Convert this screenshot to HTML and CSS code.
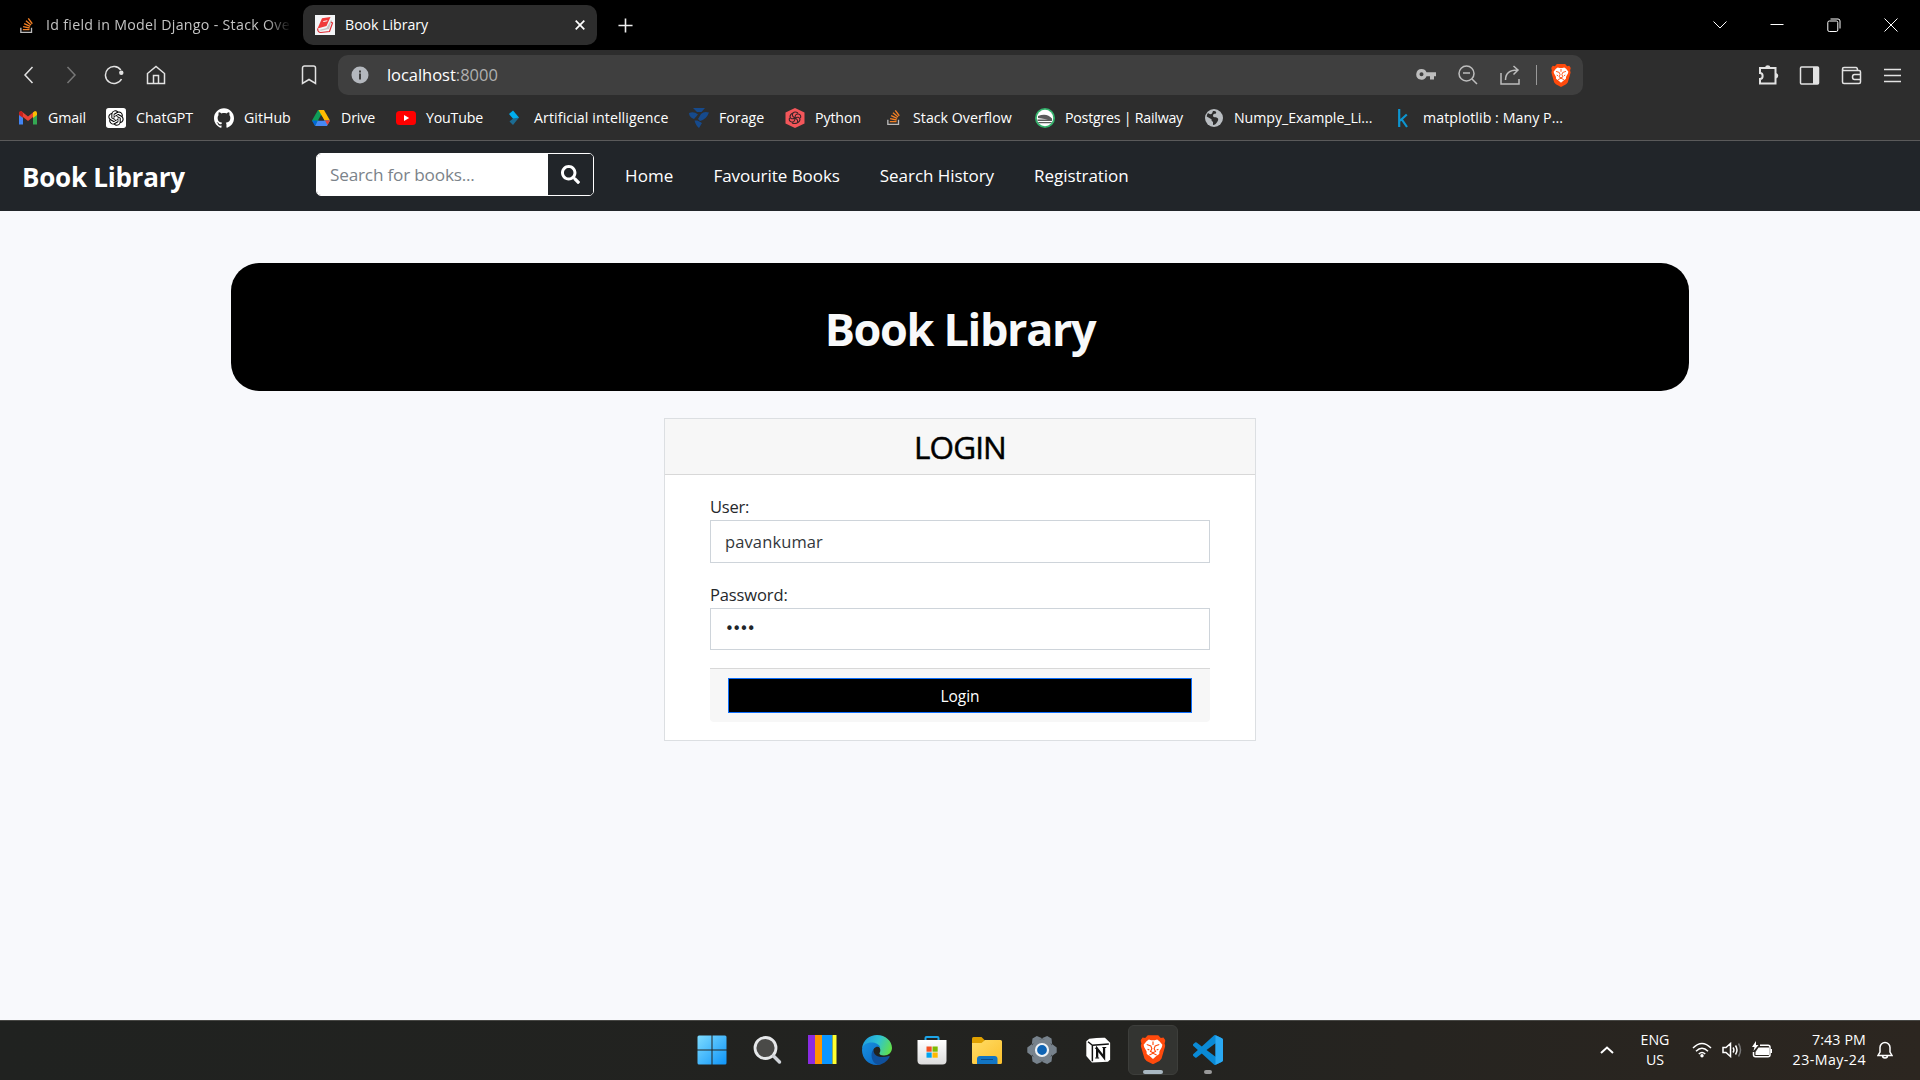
FILE: index.html
```html
<!DOCTYPE html>
<html lang="en">
<head>
<meta charset="utf-8">
<title>Book Library</title>
<link rel="stylesheet" href="styles.css">
</head>
<body>
<svg class="defs" aria-hidden="true">
  <symbol id="stack" viewBox="0 0 24 24">
    <path fill="#f48024" d="M15.725 0l-1.72 1.277 6.39 8.588 1.716-1.277L15.725 0zm-3.94 3.418l-1.369 1.644 8.225 6.85 1.369-1.644-8.225-6.85zm-3.15 4.465l-.905 1.94 9.702 4.517.904-1.94-9.701-4.517zm-1.85 4.86l-.44 2.093 10.473 2.201.44-2.092-10.473-2.203zM6.155 17.603v2.13h10.66v-2.13z"/>
    <path fill="#bcbbbb" d="M1.89 15.47V24h19.19v-8.53h-2.133v6.397H4.021v-6.396H1.89z"/>
  </symbol>
  <symbol id="brave" viewBox="0 0 24 28">
    <path fill="#ff4a0c" d="M7 0h10l2.500 2.600L22 2.200 24 5l-.9 3 .7 2.200-3.600 12.200-2 2.400L12 28l-6.200-3.200-2-2.400L.2 10.200.9 8 0 5l2-2.800 2.500.400z"/>
    <path fill="#fff" d="M8 4.200l2.400.7h3.200l2.400-.7 2.200 1.600 2.800 3.500-.6 2.300-2.200 3.900-.2 2.600L15.200 20 12 22.800 8.800 20 6 18.100l-.2-2.600-2.200-3.900L3 9.300l2.800-3.500z"/>
    <path fill="none" stroke="#ff4a0c" stroke-width="1.100" d="M6 9l3.900 1.300 1 2.700-1.300 2.600 2.400 1.200 2.400-1.200-1.300-2.600 1-2.700L18 9M12 6v3.500M8.500 19l3.500-1.600 3.500 1.600M6.800 13.500l1.700.8M17.200 13.500l-1.700.8"/>
  </symbol>
</svg>

<header class="tabs">
  <div class="tab">
    <svg class="tab-icon so" viewBox="0 0 24 24"><use href="#stack"/></svg>
    <span class="tab-title faded">Id field in Model Django - Stack Over</span>
  </div>
  <div class="tab active">
    <svg class="tab-icon book" viewBox="0 0 20 20"><path fill="#f3f5f7" d="M0 0h20v20H0z"/><path fill="#f03a3a" d="M7 3.200L15.500 2 11.500 11 2.500 13.500z"/><path fill="#c9c2c2" d="M3.500 15l8-2 4.500-8 .8.600L14 14l-8 1.700z"/><path fill="none" stroke="#e02b33" stroke-width="1.200" d="M2.800 13.500c-.5 2 .8 4 3 4l8.700-1 3-8.500-1.500-1"/><path fill="#fff" d="M8.500 6l4-.8-.4 1-4 .9z"/></svg>
    <span class="tab-title">Book Library</span>
    <svg class="tab-close" viewBox="0 0 10 10"><path d="M.7.7l8.600 8.600M9.300.7L.7 9.300"/></svg>
  </div>
  <svg class="new-tab" viewBox="0 0 16 16"><path d="M8 .5v15M.5 8h15"/></svg>
  <div class="window-buttons">
    <svg viewBox="0 0 14 14"><path d="M.5 3.500L7 10l6.500-6.500"/></svg>
    <svg viewBox="0 0 14 14"><path d="M.5 6.500h13"/></svg>
    <svg viewBox="0 0 14 14"><rect x=".8" y="3" width="10" height="10.500" rx="1.500"/><path d="M3.500 1h7.500a2 2 0 0 1 2 2v7.500"/></svg>
    <svg viewBox="0 0 14 14"><path d="M.5.5l13 13M13.500.5l-13 13"/></svg>
  </div>
</header>

<div class="toolbar">
  <div class="nav-buttons">
    <svg viewBox="0 0 20 20"><path d="M13.500 2L6 10l7.500 8"/></svg>
    <svg class="disabled" viewBox="0 0 20 20"><path d="M6.500 2l7.500 8-7.500 8"/></svg>
    <svg viewBox="0 0 20 20"><path d="M16.800 5A8.500 8.500 0 1 0 17.500 14"/><circle class="solid" cx="17.300" cy="7.700" r="2.200"/></svg>
    <svg viewBox="0 0 20 20"><path d="M1.500 8.500L10 1.500l8.500 7V18.500h-17zM7.500 18v-7.500h5V18"/></svg>
  </div>
  <svg class="bookmark-button" viewBox="0 0 20 20"><path d="M3.500 3a2 2 0 0 1 2-2h9a2 2 0 0 1 2 2v15.500L10 14.500l-6.500 4z"/></svg>
  <div class="address">
    <svg class="info" viewBox="0 0 20 20"><circle cx="10" cy="10" r="8.500"/><path d="M9 8.500h2V14.500H9zM9 5.500h2v2H9z"/></svg>
    <span class="url">localhost<span class="port">:8000</span></span>
    <div class="address-tools">
      <svg viewBox="0 0 20 20"><path class="solid" fill-rule="evenodd" d="M5.500 4a5.300 5.300 0 1 0 5 7.200H14v3.300h4v-3.300h2V7.300h-9.500a5.300 5.300 0 0 0-5-3.300zm0 3.300a2 2 0 1 1 0 4 2 2 0 0 1 0-4z"/></svg>
      <svg viewBox="0 0 20 20"><circle cx="8.500" cy="8.500" r="7.500"/><path d="M5 8h7M14 14l5 5"/></svg>
      <svg viewBox="0 0 20 20"><path d="M1 8v11h18v-5M5.500 15c0-6 4-10 12-10M13.500 1l4.500 4-4.500 4.500"/></svg>
      <i class="divider"></i>
      <svg class="brave" viewBox="0 0 24 28"><use href="#brave"/></svg>
    </div>
  </div>
  <div class="extensions">
    <svg viewBox="0 0 21 21"><path stroke-width="2" d="M2 3h15.500v15.500H2v-4.500c3.500 0 3.500-6 0-6z"/><path class="solid" d="M7 2.500a2.800 2.800 0 0 1 5.500 0zM18 8a2.800 2.800 0 0 1 0 5.500z"/></svg>
    <svg viewBox="0 0 21 21"><rect x="1.500" y="2" width="18" height="17" rx="1"/><path class="solid" d="M14 2h5.500v17H14z"/></svg>
    <svg viewBox="0 0 21 21"><path d="M1.500 4v13q0 1.500 1.500 1.500h15q1.500 0 1.500-1.500V7q0-1.500-1.500-1.500H3Q1.500 5.500 1.500 4q0-1.500 1.500-1.500h12q1.500 0 1.500 3M19.500 9.500h-6q-2 0-2 2.500t2 2.500h6z"/></svg>
    <svg viewBox="0 0 21 21"><path d="M2 4.500h17M2 10.500h17M2 16.500h17"/></svg>
  </div>
</div>

<nav class="bookmarks">
  <div class="bm gmail"><svg viewBox="0 0 20 20"><path fill="#4285f4" d="M1 5.500v11h4V9z"/><path fill="#34a853" d="M19 5.500v11h-4V9z"/><path fill="#ea4335" d="M1 4.500L3.500 3.200 10 8.500l6.500-5.300L15 9l-5 4-5-4z"/><path fill="#c5221f" d="M1 7V5q0-2 2-2l2 1.500V10z"/><path fill="#fbbc04" d="M19 7V5q0-2-2-2l-2 1.500V10z"/></svg><span>Gmail</span></div>
  <div class="bm chatgpt"><svg viewBox="0 0 30 30"><rect width="30" height="30" rx="4" fill="#fff"/><path transform="translate(3.500 3.500) scale(.96)" d="M22.2819 9.8211a5.9847 5.9847 0 0 0-.5157-4.9108 6.0462 6.0462 0 0 0-6.5098-2.9A6.0651 6.0651 0 0 0 4.9807 4.1818a5.9847 5.9847 0 0 0-3.9977 2.9 6.0462 6.0462 0 0 0 .7427 7.0966 5.98 5.98 0 0 0 .511 4.9107 6.051 6.051 0 0 0 6.5146 2.9001A5.9847 5.9847 0 0 0 13.2599 24a6.0557 6.0557 0 0 0 5.7718-4.2058 5.9894 5.9894 0 0 0 3.9977-2.9001 6.0557 6.0557 0 0 0-.7475-7.0729zm-9.022 12.6081a4.4755 4.4755 0 0 1-2.8764-1.0408l.1419-.0804 4.7783-2.7582a.7948.7948 0 0 0 .3927-.6813v-6.7369l2.02 1.1686a.071.071 0 0 1 .038.052v5.5826a4.504 4.504 0 0 1-4.4945 4.4944zm-9.6607-4.1254a4.4708 4.4708 0 0 1-.5346-3.0137l.142.0852 4.783 2.7582a.7712.7712 0 0 0 .7806 0l5.8428-3.3685v2.3324a.0804.0804 0 0 1-.0332.0615L9.74 19.9502a4.4992 4.4992 0 0 1-6.1408-1.6464zM2.3408 7.8956a4.485 4.485 0 0 1 2.3655-1.9728V11.6a.7664.7664 0 0 0 .3879.6765l5.8144 3.3543-2.0201 1.1685a.0757.0757 0 0 1-.071 0l-4.8303-2.7865A4.504 4.504 0 0 1 2.3408 7.872zm16.5963 3.8558L13.1038 8.364 15.1192 7.2a.0757.0757 0 0 1 .071 0l4.8303 2.7913a4.4944 4.4944 0 0 1-.6765 8.1042v-5.6772a.79.79 0 0 0-.407-.667zm2.0107-3.0231l-.142-.0852-4.7735-2.7818a.7759.7759 0 0 0-.7854 0L9.409 9.2297V6.8974a.0662.0662 0 0 1 .0284-.0615l4.8303-2.7866a4.4992 4.4992 0 0 1 6.6802 4.66zM8.3065 12.863l-2.02-1.1638a.0804.0804 0 0 1-.038-.0567V6.0742a4.4992 4.4992 0 0 1 7.3757-3.4537l-.142.0805L8.704 5.459a.7948.7948 0 0 0-.3927.6813zm1.0976-2.3654l2.602-1.4998 2.6069 1.4998v2.9994l-2.5974 1.4997-2.6067-1.4997Z"/></svg><span>ChatGPT</span></div>
  <div class="bm github"><svg viewBox="0 0 24 24"><path fill="#fff" d="M12 .297c-6.63 0-12 5.373-12 12 0 5.303 3.438 9.8 8.205 11.385.6.113.82-.258.82-.577 0-.285-.01-1.04-.015-2.04-3.338.724-4.042-1.61-4.042-1.61C4.422 18.07 3.633 17.7 3.633 17.7c-1.087-.744.084-.729.084-.729 1.205.084 1.838 1.236 1.838 1.236 1.07 1.835 2.809 1.305 3.495.998.108-.776.417-1.305.76-1.605-2.665-.3-5.466-1.332-5.466-5.93 0-1.31.465-2.38 1.235-3.22-.135-.303-.54-1.523.105-3.176 0 0 1.005-.322 3.3 1.23.96-.267 1.98-.399 3-.405 1.02.006 2.04.138 3 .405 2.28-1.552 3.285-1.23 3.285-1.23.645 1.653.24 2.873.12 3.176.765.84 1.23 1.91 1.23 3.22 0 4.61-2.805 5.625-5.475 5.92.42.36.81 1.096.81 2.22 0 1.606-.015 2.896-.015 3.286 0 .315.21.69.825.57C20.565 22.092 24 17.592 24 12.297c0-6.627-5.373-12-12-12"/></svg><span>GitHub</span></div>
  <div class="bm drive"><svg viewBox="0 0 20 20"><path fill="#0f9d58" d="M7 2h3l2 3.500L4.500 18 1 12.500z"/><path fill="#ffba00" d="M7.500 2h5.500L19 12.500h-5.500z"/><path fill="#4688f4" d="M4 18l2.800-5.500H19L16 18z"/><path fill="#ea4335" d="M14 12.500h5L16.500 17z"/><path fill="#2d2d2d" d="M10 7l3 5.500H6.900z"/><path fill="#0066da" d="M1 12.500h5.500L4 18z"/></svg><span>Drive</span></div>
  <div class="bm youtube"><svg viewBox="0 0 20 20"><rect y="3" width="20" height="14" rx="3.500" fill="red"/><path fill="#fff" d="M8 7l5.200 3L8 13z"/></svg><span>YouTube</span></div>
  <div class="bm ai"><svg viewBox="0 0 20 20"><path fill="#00aeef" d="M5 6l4-3.500 6 7L11 13z"/><path fill="#1c6c93" d="M9 10.500l6-1L9 17l-3.500-3.500z"/></svg><span>Artificial intelligence</span></div>
  <div class="bm forage"><svg viewBox="0 0 20 20"><g fill="#164a8c"><path d="M4 0h12l-3.500 4H8zM0 5q5-2 9 1.500L5 11Q0 9 0 5zM20 4.500q-5-1.500-8 1.500L9 11l2 2q6-1 9-8.500zM5.500 12.500l3 0L13 15l-3 5q-3-2-4.500-7.500z"/></g></svg><span>Forage</span></div>
  <div class="bm python"><svg viewBox="0 0 20 20"><path fill="#f4565a" d="M10 0l9.500 4.500v11L10 20 .5 15.500v-11z"/><g fill="none" stroke="#3b2528" stroke-width="1.100"><path d="M10 10q-4-2-2-5 2-2 5 0M10 10q0-4.500 3.500-4 3 1 2 4M10 10q4-2 5 1 0 3-3 4M10 10q4 2 2 5-2 1-5 0M10 10q0 4.500-3.500 4-3-1-2-4M10 10q-4 2-5-1 0-3 3-4"/></g></svg><span>Python</span></div>
  <div class="bm overflow"><svg class="so" viewBox="0 0 24 24"><use href="#stack"/></svg><span>Stack Overflow</span></div>
  <div class="bm postgres"><svg viewBox="0 0 20 20"><circle cx="10" cy="10" r="10" fill="#34b26c"/><circle cx="10" cy="10" r="8.200" fill="#fff"/><path fill="#5b5b5b" d="M3 8q9-3.500 14 2.500v2.500H2.500v-1.500H13L3 10zM3 14h14l-1 1.300H4z"/></svg><span>Postgres | Railway</span></div>
  <div class="bm numpy"><svg viewBox="0 0 20 20"><circle cx="10" cy="10" r="9" fill="#b9bdc1"/><path fill="#2d2d2d" d="M9 3q4-.5 3 2.500-3 0-3 2.200 0 1.500 3 1.500 3.500 1 1.500 4.300-2 3.500-4.500 3.500v-3q-2-1-1.500-2.800L2.700 8.500q0-2 1.300-3.500 2 2 4 .5z"/></svg><span>Numpy_Example_Li...</span></div>
  <div class="bm kaggle"><svg viewBox="0 0 20 20"><path fill="none" stroke="#0d95d0" stroke-width="2.200" d="M6.200 1v18M13.800 6.500L7 12.800M8.500 11l5.500 8"/></svg><span>matplotlib : Many P...</span></div>
</nav>

<nav class="navbar">
  <span class="brand">Book Library</span>
  <form class="search">
    <input type="text" placeholder="Search for books...">
    <button type="button" aria-label="Search"><svg viewBox="0 0 512 512"><path fill="#fff" d="M505 442.700L405.300 343c-4.500-4.500-10.600-7-17-7H372c27.600-35.300 44-79.700 44-128C416 93.100 322.900 0 208 0S0 93.100 0 208s93.100 208 208 208c48.300 0 92.700-16.400 128-44v16.300c0 6.400 2.500 12.500 7 17l99.700 99.700c9.400 9.400 24.600 9.400 33.900 0l28.300-28.300c9.400-9.400 9.400-24.600.1-34zM208 336c-70.700 0-128-57.200-128-128 0-70.700 57.200-128 128-128 70.700 0 128 57.200 128 128 0 70.700-57.200 128-128 128z"/></svg></button>
  </form>
  <div class="links">
    <a class="home">Home</a><a>Favourite Books</a><a>Search History</a><a>Registration</a>
  </div>
</nav>

<main>
  <section class="hero"><h1>Book Library</h1></section>
  <section class="card">
    <h2>LOGIN</h2>
    <form class="card-body">
      <label class="user" for="user">User:</label>
      <input id="user" type="text" value="pavankumar">
      <label for="pass">Password:</label>
      <input id="pass" type="password" value="pass">
      <div class="card-footer"><button type="button">Login</button></div>
    </form>
  </section>
</main>

<footer class="taskbar">
  <div class="apps">
    <div class="app"><svg viewBox="0 0 30 30"><defs><linearGradient id="win" x1="0" y1="0" x2="1" y2="1"><stop offset="0" stop-color="#7edcff"/><stop offset="1" stop-color="#0e94f8"/></linearGradient></defs><path fill="url(#win)" d="M2 .5h12.500v14H.5V2Q.5.500 2 .5zM15.500.5H28q1.500 0 1.500 1.500v12.500h-14zM.5 15.500h14v14H2q-1.500 0-1.500-1.500zM15.500 15.500h14V28q0 1.500-1.500 1.500H15.500z"/></svg></div>
    <div class="app"><svg viewBox="0 0 30 30"><circle cx="13.500" cy="13" r="10.500" fill="#4a4a48" stroke="#e6e8ea" stroke-width="2.800"/><path d="M21.500 21l6 6" stroke="#cfd3d8" stroke-width="3.500" stroke-linecap="round"/></svg></div>
    <div class="app"><svg viewBox="0 0 30 30"><path fill="#8a2be2" d="M1 0h7v29H1z"/><path fill="#ff9500" d="M8 0h7v29H8z"/><path fill="#0a96ff" d="M15 0h10.500v29H15z"/><path fill="#ffff2e" d="M25.500 0h4v29h-4z"/></svg></div>
    <div class="app"><svg viewBox="0 0 30 30"><defs><linearGradient id="e1" x1="0" y1=".3" x2="1" y2=".6"><stop offset="0" stop-color="#1e9de0"/><stop offset=".5" stop-color="#2fc3d3"/><stop offset="1" stop-color="#62e04a"/></linearGradient><linearGradient id="e2" x1="0" y1="0" x2="1" y2="1"><stop offset="0" stop-color="#1791e0"/><stop offset="1" stop-color="#0a62c0"/></linearGradient></defs><path fill="url(#e1)" d="M0 13.500C1 5 7.500 0 15 0c8.500 0 15 6 15 13 0 4.500-3.500 7.500-8 7.500-3.500 0-5-1.500-4.500-2.500 2-2.500.5-8-5-8C7 10 2 10.500 0 13.500z"/><path fill="url(#e2)" d="M0 15C.2 9.500 5 7.500 9.500 7.500c4 0 7.500 1.800 8.800 5-4.300-2-7.300 1-7.300 4.500 0 6 6.500 9.500 11 9C19.500 29 17.500 30 14.500 30 6.500 30 0 23.500 0 15z"/><path fill="#10519d" d="M11.500 14.500c-.5 6 6 9.500 15.500 6.500q1 0 .7.700C25 27 20 29.500 16 29.800 9 28 8 18 11.500 14.500z"/></svg></div>
    <div class="app"><svg viewBox="0 0 30 30"><defs><linearGradient id="bag" x1="0" y1="0" x2="0" y2="1"><stop offset="0" stop-color="#fff"/><stop offset="1" stop-color="#dcdcdc"/></linearGradient></defs><path fill="none" stroke="#1da5e8" stroke-width="2" d="M8.500 7V3q0-1 1-1h11q1 0 1 1v4"/><path fill="url(#bag)" d="M.5 5h29v20.500q0 4-4 4h-21q-4 0-4-4z"/><path fill="#f25022" d="M9.500 11.500h5.200v5.200H9.500z"/><path fill="#7fba00" d="M15.500 11.500h5.200v5.200h-5.200z"/><path fill="#00a4ef" d="M9.500 17.500h5.200v5.200H9.500z"/><path fill="#ffb900" d="M15.500 17.500h5.200v5.200h-5.200z"/></svg></div>
    <div class="app"><svg viewBox="0 0 30 30"><defs><linearGradient id="fold" x1="0" y1="0" x2="1" y2="1"><stop offset="0" stop-color="#ffdc66"/><stop offset="1" stop-color="#fcc02c"/></linearGradient></defs><path fill="#dfa000" d="M0 3.500Q0 2 1.500 2h8l3.500 3.500L10 9H0z"/><path fill="url(#fold)" d="M0 8h9.500L13 5h15.500Q30 5 30 6.500v21q0 1.500-1.500 1.500h-27Q0 29 0 27.500z"/><path fill="#1275c4" d="M5 29v-5q0-3 3-3h14.500q3 0 3 3v5z"/><path stroke="#0b4c8a" d="M9 24.500h12"/></svg></div>
    <div class="app"><svg viewBox="0 0 30 30"><g fill="#77828c"><circle cx="15" cy="15" r="11"/><g id="teeth"><path d="M.3 12.500L5 9v12L.3 17.500zM29.700 12.500L25 9v12l4.700-3.500z"/></g><use href="#teeth" transform="rotate(60 15 15)"/><use href="#teeth" transform="rotate(120 15 15)"/></g><circle cx="15" cy="15" r="6" fill="#0f64b4" stroke="#eef2f5" stroke-width="2.200"/></svg></div>
    <div class="app"><svg viewBox="0 0 30 30"><path fill="#fff" d="M1.500 5L5 2q10-1.200 18-1l6 5.500V26l-2.500 2.500L8 29.500 1.500 22z"/><path fill="none" stroke="#111" stroke-width="1.700" d="M3.500 5.500L8.500 9.500V28M8.500 9.500L27.500 8"/><path fill="none" stroke="#111" stroke-width="2.600" d="M14 24V13.500l8 10.200V12"/><path stroke="#111" stroke-width="1.200" d="M11.500 13h3.500M11.800 24.300h4.500M20 12h4.500"/></svg></div>
    <div class="app current"><svg viewBox="0 0 30 30"><use href="#brave" x="2.500" y="0" width="25" height="29.500"/></svg></div>
    <div class="app running"><svg viewBox="0 0 24 24"><path fill="#0a8ad6" d="M23.150 2.587L18.210.21a1.494 1.494 0 0 0-1.705.29l-9.460 8.630-4.120-3.128a.999.999 0 0 0-1.276.057L.327 7.261A1 1 0 0 0 .326 8.740L3.899 12 .326 15.260a1 1 0 0 0 .001 1.479L1.650 17.940a.999.999 0 0 0 1.276.057l4.120-3.128 9.460 8.630a1.492 1.492 0 0 0 1.704.29l4.942-2.377A1.500 1.500 0 0 0 24 20.060V3.939a1.500 1.500 0 0 0-.85-1.352zm-5.146 14.861L10.826 12l7.178-5.448v10.896z"/><path fill="#2aa9f3" d="M18 .15l5.150 2.437q.85.500.85 1.352V20.060q0 1-.85 1.362L18 23.850z"/></svg></div>
  </div>
  <div class="tray">
    <svg class="up" viewBox="0 0 14 8"><path d="M1 7l6-5.500L13 7"/></svg>
    <div class="lang"><span>ENG</span><span>US</span></div>
    <svg class="wifi" viewBox="0 0 20 16"><path d="M1 6q9-9 18 0M4 9.300q6-6 12 0M6.800 12q3.200-3 6.400 0"/><circle cx="10" cy="13.800" r="1.700"/></svg>
    <svg class="sound" viewBox="0 0 20 16"><path d="M1 5.500h3L8.500 1.500v13L4 10.500H1zM11 5.500q1.800 2.500 0 5M13.500 3.500q3 4.500 0 9"/><path class="dim" d="M16.500 1.500q4 6.500 0 13"/></svg>
    <svg class="battery" viewBox="0 0 20 17"><path class="fill" d="M6.500 6.500h10.500v7.500H3.500v-3z"/><path d="M8 4.200h8q2 0 2 2v7.500q0 2-2 2H3.500q-2 0-2-2V11"/><path class="fill" d="M18.500 8h1.500v4h-1.500zM4 0L0 6h2.500L1.500 10 6.500 4H4z"/></svg>
    <div class="clock"><span>7:43 PM</span><span class="date">23-May-24</span></div>
    <svg class="bell" viewBox="0 0 16 18"><path d="M1 14.500h14L13 11V6.500a5 5 0 0 0-10 0V11zM5.500 14.500q0 2.500 2.500 2.500t2.500-2.500"/></svg>
  </div>
</footer>
</body>
</html>
```
FILE: styles.css
```css
* { box-sizing: border-box; }
body {
  margin: 0;
  width: 1920px;
  height: 1080px;
  overflow: hidden;
  display: flex;
  flex-direction: column;
  font: 14.2px/20px "Open Sans", "Noto Sans", sans-serif;
  background: #f8f9fc;
  color: #fff;
  white-space: nowrap;
}
svg { flex: none; display: block; }
.defs { width: 0; height: 0; position: absolute; }
input, button { font-family: inherit; margin: 0; border-radius: 0; }

/* Tab strip */
.tabs { height: 50px; flex: none; background: #000; display: flex; align-items: center; }
.tab { flex: none; width: 293.500px; height: 40px; display: flex; align-items: center; border-radius: 10px; }
.tab:first-child { width: 303px; padding-left: 19px; }
.tab.active { background: #2d2d2d; padding: 0 12px; }
.so { width: 15px; height: 17px; }
.tab-icon.book { width: 20px; height: 20px; }
.tab-title { margin-left: 10px; letter-spacing: -.04px; }
.tab-title.faded {
  margin-left: 12px;
  letter-spacing: .3px;
  color: #c4c4c4;
  -webkit-mask-image: linear-gradient(90deg, #000 88%, transparent 98%);
  mask-image: linear-gradient(90deg, #000 88%, transparent 98%);
}
.tab-close { width: 10px; height: 10px; margin-left: auto; fill: none; stroke: #fff; stroke-width: 1.700; }
.new-tab { width: 15px; height: 15px; margin-left: 21px; fill: none; stroke: #eee; stroke-width: 1.700; }
.window-buttons { margin-left: auto; width: 229px; display: grid; grid-template-columns: repeat(4, 1fr); justify-items: center; }
.window-buttons svg { width: 14px; height: 14px; fill: none; stroke: #fff; stroke-width: 1; }

/* Address row */
.toolbar { height: 50px; flex: none; background: #2d2d2d; display: flex; align-items: center; padding: 0 17px 0 19px; }
.toolbar svg { width: 20px; height: 20px; fill: none; stroke: #e2e2e2; stroke-width: 1.500; }
.toolbar .solid { fill: #e2e2e2; stroke: none; }
.nav-buttons { display: flex; gap: 22.300px; }
.nav-buttons .disabled { stroke: #777; }
.toolbar .bookmark-button { margin-left: 133px; }
.address { width: 1245px; height: 40px; margin-left: 19px; padding: 0 12px; display: flex; align-items: center; background: #3f3f3f; border-radius: 10px; }
.toolbar .info { fill: #b4b8be; stroke: none; }
.info path { fill: #3f3f3f; }
.url { margin-left: 17px; font-size: 16.500px; letter-spacing: -.02px; }
.port { color: #b0b0b0; }
.address-tools { margin-left: auto; display: flex; align-items: center; gap: 22px; }
.toolbar .address-tools svg { stroke: #bdbdbd; }
.address-tools .solid { fill: #bdbdbd; }
.divider { width: 1px; height: 20px; margin: 0 -8px 0 -6px; background: #999; }
.toolbar .address-tools .brave { width: 20px; height: 23px; stroke: none; }
.extensions { margin-left: auto; display: flex; gap: 20.300px; }
.toolbar .extensions svg { width: 21px; height: 21px; }

/* Bookmarks */
.bookmarks { height: 41px; flex: none; padding: 0 18px 5px; background: #2d2d2d; border-bottom: 1px solid #5a5a5a; display: flex; align-items: center; }
.bm { display: flex; align-items: center; gap: 10px; }
.bm svg { width: 20px; height: 20px; }
.bm .so { width: 15px; height: 17px; margin: 0 2px 0 3px; }
.gmail { width: 88px; letter-spacing: -.1px; }
.chatgpt { width: 108px; letter-spacing: -.04px; }
.github { width: 97px; }
.drive { width: 85px; letter-spacing: -.15px; }
.youtube { width: 108px; letter-spacing: -.19px; }
.ai { width: 185px; letter-spacing: .09px; }
.forage { width: 96px; }
.python { width: 98px; letter-spacing: -.11px; }
.overflow { width: 152px; letter-spacing: .02px; }
.postgres { width: 169px; letter-spacing: -.23px; }
.numpy { width: 189px; letter-spacing: -.06px; }
.kaggle { letter-spacing: .06px; }

/* Site navigation */
.navbar { height: 70px; flex: none; padding: 0 22px; background: #212529; display: flex; align-items: center; }
.brand { width: 294px; padding-top: 1px; font-size: 26px; line-height: 36px; font-weight: 700; letter-spacing: -.25px; }
.search { width: 278px; height: 43px; display: flex; margin-top: -3px; border: 1px solid #fff; border-radius: 5px; overflow: hidden; }
.search input { width: 231px; border: 0; padding: 0 13px 1px; font-size: 17.200px; letter-spacing: -.2px; background: #fff; }
.search input::placeholder { color: #7b838a; opacity: 1; }
.search button { flex: 1; padding: 0; border: 0; background: #212529; display: grid; place-items: center; }
.search svg { width: 19px; height: 19px; }
.links { display: flex; gap: 40px; margin-left: 31px; font-size: 17px; letter-spacing: -.05px; }
.links .home { letter-spacing: .11px; }

/* Page content */
main { flex: 1; display: flex; flex-direction: column; align-items: center; padding-top: 52px; }
.hero { width: 1458px; height: 128px; background: #000; border-radius: 28px; display: grid; place-items: center; }
h1 { margin: 4px 0 0; font-size: 45px; line-height: 60px; letter-spacing: -1.350px; color: #f8f9fa; }
.card { width: 592px; height: 323px; margin-top: 27px; background: #fff; border: 1px solid #dcdfe2; color: #111; }
h2 { margin: 0; height: 56px; background: #f7f7f7; border-bottom: 1px solid #d8d8d8; text-align: center; font-size: 31.500px; line-height: 55px; font-weight: 400; letter-spacing: -.9px; color: #000; -webkit-text-stroke: .5px #000; }
.card-body { padding: 19px 45px 0; }
label { display: block; font-size: 16.500px; line-height: 26px; letter-spacing: -.12px; color: #25282b; }
label.user { letter-spacing: -.2px; }
.card-body input { display: block; width: 100%; height: 43px; margin-bottom: 19px; padding: 0 14px; border: 1px solid #ced4da; background: #fff; color: #33373b; font-size: 16.500px; letter-spacing: .12px; }
.card-body #pass { height: 42px; margin-bottom: 18px; color: #212529; font: 15px "DejaVu Sans", sans-serif; letter-spacing: -1.600px; }
.card-footer { height: 54px; padding: 9px 18px; background: #f7f7f7; border-top: 1px solid #d8d8d8; border-radius: 0 0 4px 4px; }
.card-footer button { display: block; width: 100%; height: 35px; padding: 0; border: 1px solid #0d6efd; background: #000; color: #fff; font-size: 15.500px; }

/* Taskbar */
.taskbar { height: 60px; flex: none; padding: 0 0 2px 684px; border-top: 1px solid #474744; background: linear-gradient(90deg, #202220, #232320 60%, #2c2620); display: flex; }
.apps { display: grid; grid-template-columns: repeat(10, 55.150px); }
.app { display: grid; place-items: center; position: relative; }
.app svg { width: 30px; height: 30px; }
.app:nth-child(8) svg { width: 26px; height: 26px; }
.current::before { content: ""; position: absolute; inset: 4px 2px 3px 3px; background: #333431; border: 1px solid #3d3e3b; border-radius: 6px; }
.current svg { position: relative; }
.current::after, .running::after { content: ""; position: absolute; bottom: 4px; height: 4px; border-radius: 2px; background: #a9b8c2; width: 20px; }
.running::after { width: 8px; background: #999; }
.tray { margin-left: auto; padding-right: 27px; display: flex; align-items: center; }
.tray svg { fill: none; stroke: #fff; stroke-width: 1.500; }
.tray .fill, .tray circle { fill: #fff; stroke: none; }
.tray .dim { stroke: #777; }
.tray .up { width: 14px; height: 8px; stroke-width: 2; }
.lang { width: 30px; margin-left: 26px; display: flex; flex-direction: column; align-items: center; }
.wifi { width: 20px; height: 16px; margin-left: 22px; }
.sound { width: 20px; height: 16px; margin-left: 10px; }
.battery { width: 20px; height: 17px; margin-left: 10px; }
.clock { width: 94px; display: flex; flex-direction: column; align-items: flex-end; letter-spacing: .14px; }
.date { letter-spacing: .45px; }
.bell { width: 16px; height: 18px; margin-left: 11px; }
```
